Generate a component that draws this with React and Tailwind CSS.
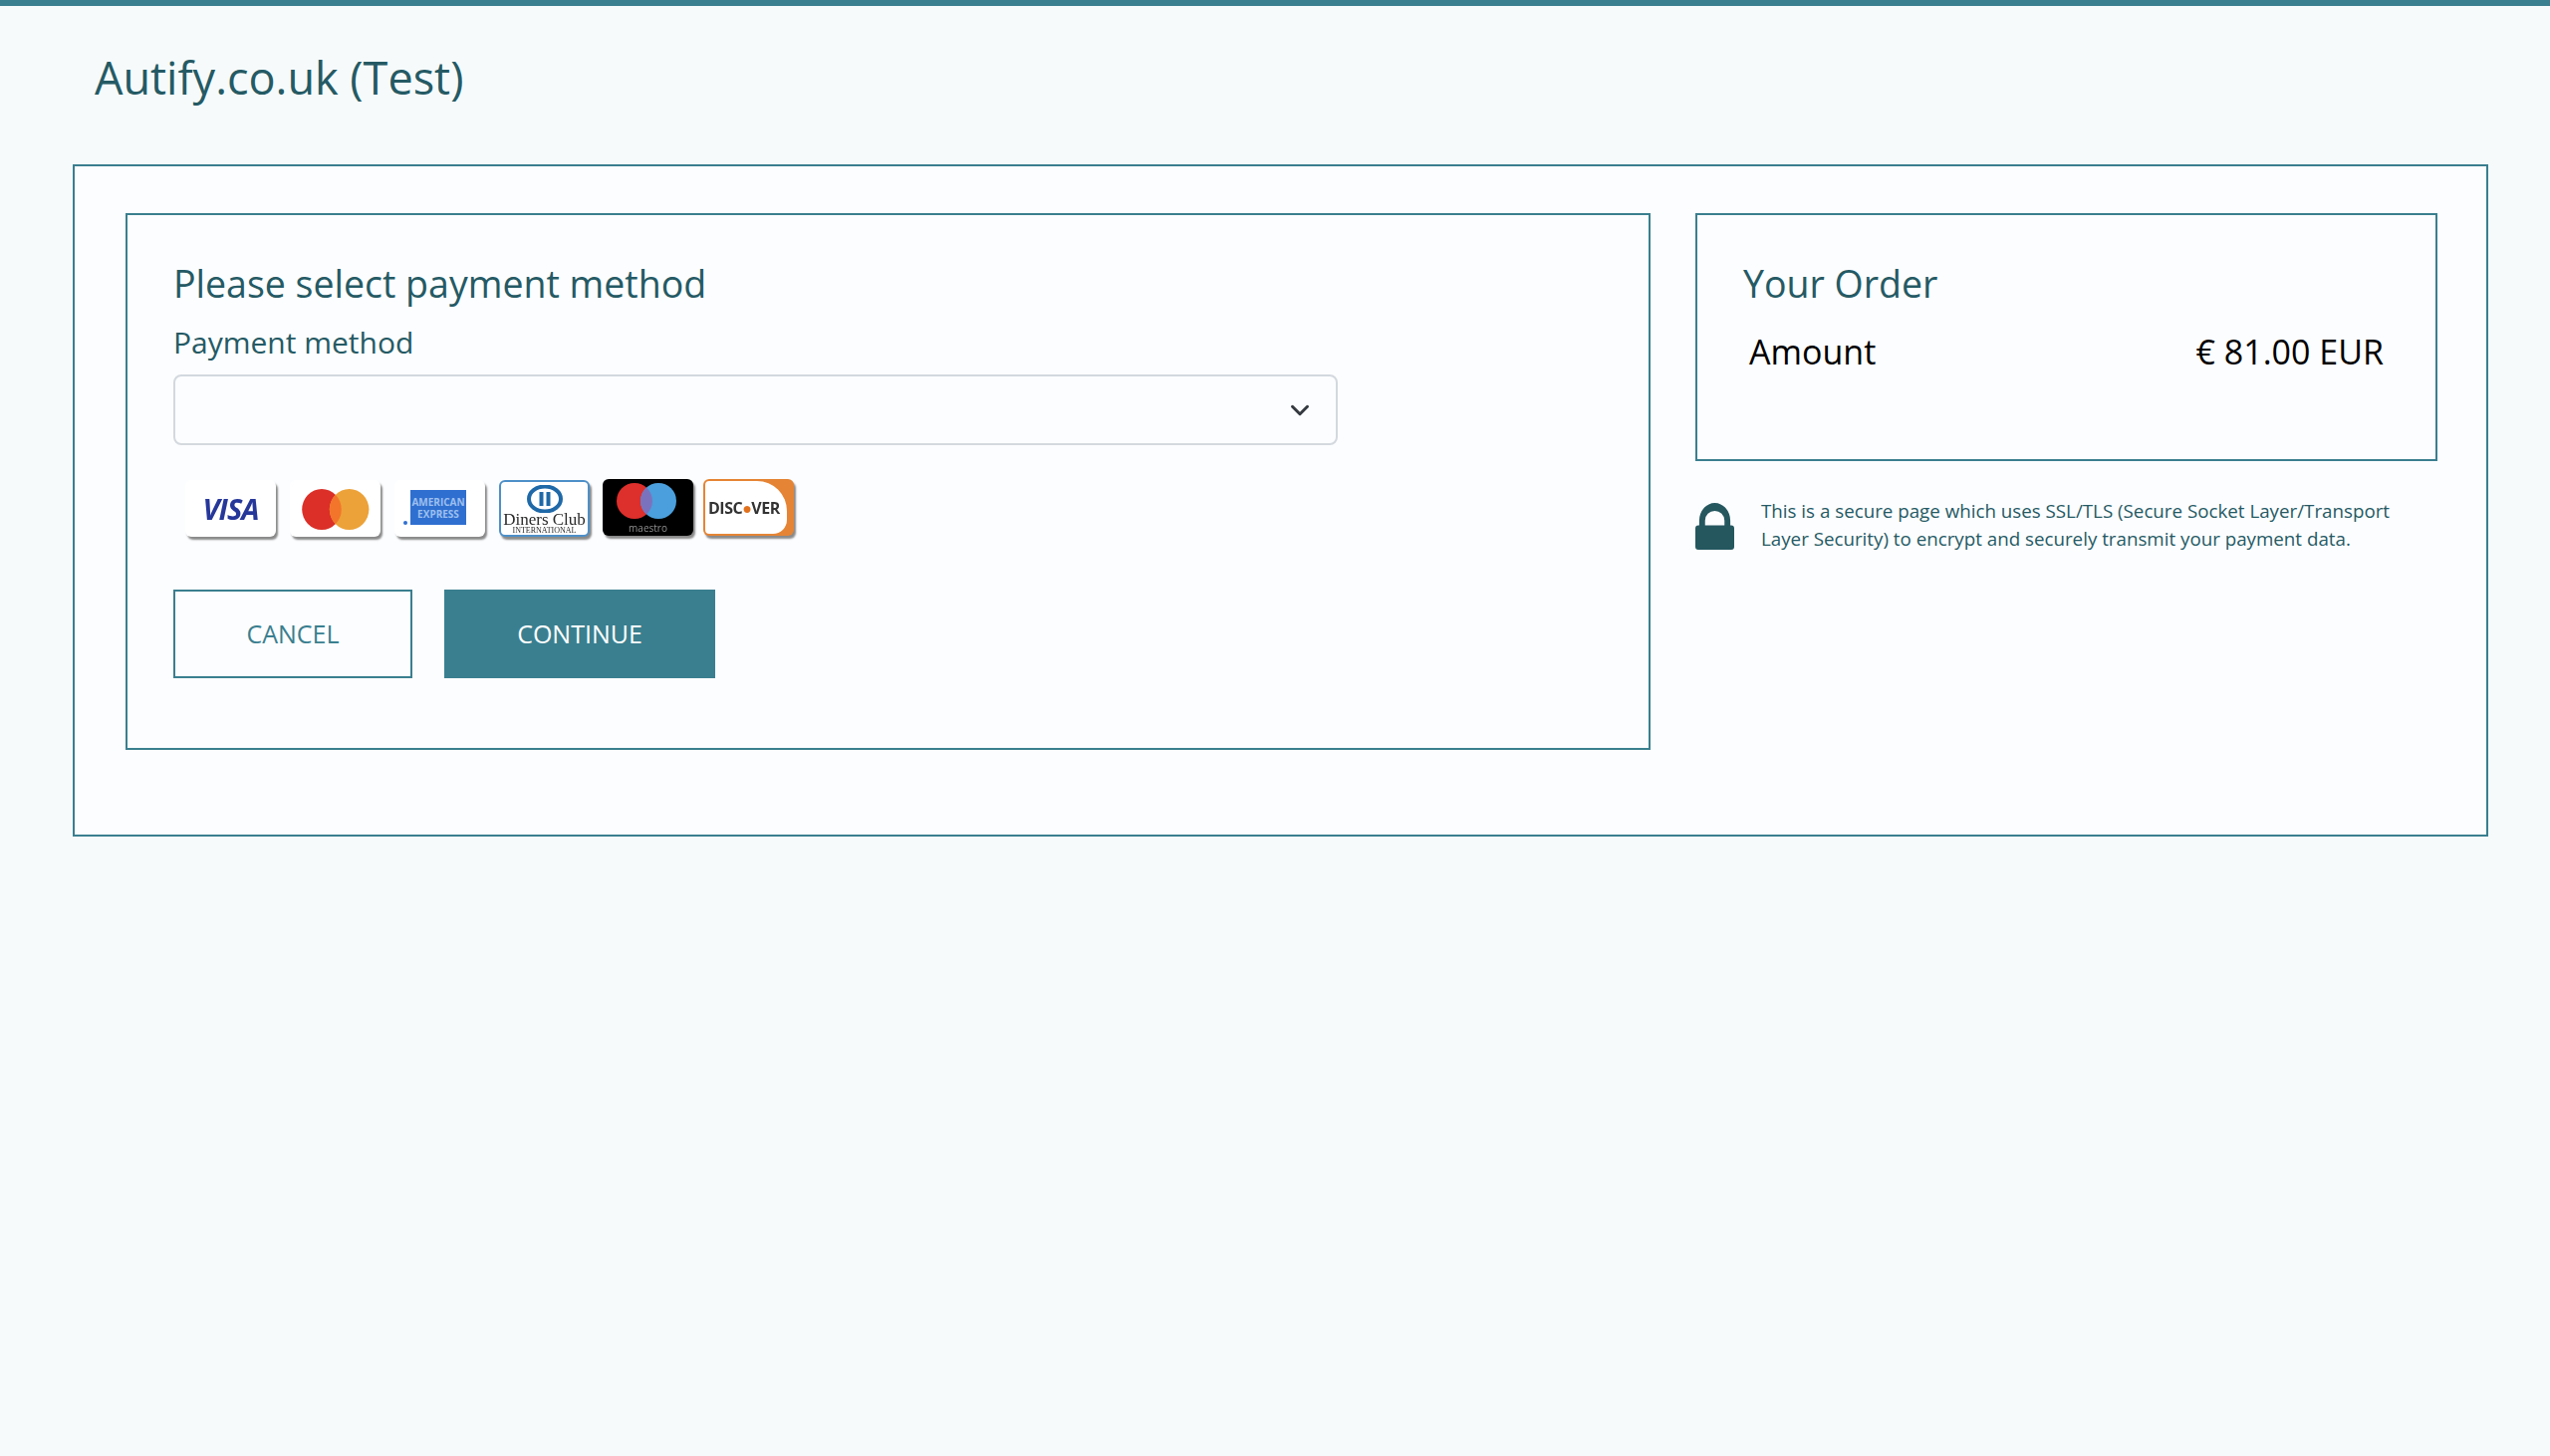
import React from 'react';
import { ChevronDown } from 'lucide-react';

function Card({ className = '', children }) {
  return (
    <div className={`w-[91px] h-[57px] rounded-[6px] overflow-hidden shrink-0 relative shadow-[2px_3px_2px_#8a8a8a] ${className}`}>
      {children}
    </div>
  );
}

export default function App() {
  return (
    <div className="min-h-[1462px] bg-[#f6fafb] font-['Open_Sans',sans-serif] text-[#255a64]">
      <div className="h-[6px] bg-[#3a7f8f]" />

      <h1 className="pl-[95px] pt-[39px] h-[159px] text-[45px] leading-[66px]">Autify.co.uk (Test)</h1>

      {/* Outer panel */}
      <div className="ml-[73px] mr-[62px] h-[675px] border-2 border-[#3a7f8f] bg-[#fcfdff] pl-[51px] pt-[47px] flex items-start">
        {/* Payment method */}
        <div className="w-[1531px] h-[539px] border-2 border-[#3a7f8f] pl-[46px] pt-[44px] shrink-0">
          <h2 className="text-[37.5px] leading-[50px]">Please select payment method</h2>
          <label className="block text-[30px] leading-[42px] mt-[13px]">Payment method</label>

          <div className="w-[1169px] h-[71px] mt-[11px] border-2 border-[#d3d9de] rounded-[8px] flex items-center justify-end pr-[21px]">
            <ChevronDown className="w-[30px] h-[30px] text-[#343a40]" strokeWidth={2.4} />
          </div>

          {/* Card logos */}
          <div className="flex items-start gap-[14px] ml-[12px] mt-[35px] h-[60px] blur-[0.5px]">
            <Card className="bg-white">
              <div className="h-full flex items-center justify-center text-[29px] font-bold italic text-[#26379a] tracking-[-1px]">VISA</div>
            </Card>
            <Card className="bg-white">
              <svg viewBox="0 0 91 57" className="w-full h-full">
                <ellipse cx="32" cy="29.5" rx="19.8" ry="20.5" fill="#db2f28" />
                <ellipse cx="59.6" cy="29.5" rx="19.8" ry="20.5" fill="#eca238" />
                <path d="M45.8 14.8a19.8 20.5 0 0 1 0 29.4a19.8 20.5 0 0 1 0-29.4z" fill="#f2752b" />
              </svg>
            </Card>
            <Card className="bg-white">
              <div className="absolute left-[16px] top-[10px] w-[56px] h-[35px] bg-[#2f6fd0] flex flex-col items-center justify-center text-[10px] leading-[12px] font-bold text-[#9dbfee]">
                <span>AMERICAN</span>
                <span>EXPRESS</span>
              </div>
              <div className="absolute left-[9px] top-[41px] w-[4px] h-[4px] rounded-full bg-[#2f6fd0]" />
            </Card>
            <Card className="bg-white border-2 border-[#4d90c8]">
              <div className="flex flex-col items-center pt-[3px] text-[#2a2a2a]">
                <svg viewBox="0 0 36 28" className="w-[36px] h-[28px] shrink-0">
                  <ellipse cx="18" cy="14" rx="16" ry="12.5" fill="none" stroke="#1f69a8" strokeWidth="4" />
                  <path d="M14.5 7v14M21.5 7v14" stroke="#1f69a8" strokeWidth="4" />
                </svg>
                <span className="font-['Liberation_Serif',serif] text-[17px] leading-[13px] whitespace-nowrap">Diners Club</span>
                <span className="font-['Liberation_Serif',serif] text-[8px] leading-[9px] whitespace-nowrap">INTERNATIONAL</span>
              </div>
            </Card>
            <Card className="bg-black -mt-px -ml-[1px]">
              <svg viewBox="0 0 91 57" className="absolute inset-0 w-full h-full">
                <ellipse cx="32" cy="22" rx="18" ry="18" fill="#dd2f2b" />
                <ellipse cx="56" cy="22" rx="18" ry="18" fill="#4a9fdc" />
                <path d="M44 8.6a18 18 0 0 1 0 26.8a18 18 0 0 1 0-26.8z" fill="#7b72bd" />
              </svg>
              <span className="absolute left-0 right-0 bottom-[2px] text-center text-[10px] leading-[12px] text-[#8f8f8f]">maestro</span>
            </Card>
            <Card className="bg-[#e58434] -mt-px -ml-[4px]">
              <div className="absolute left-[2px] top-[2px] bottom-[2px] right-[7px] bg-white rounded-l-[4px] rounded-tr-[30px] rounded-br-[14px] flex items-center pl-[3px]">
                <span className="text-[16px] font-bold text-[#333] tracking-[-0.5px] whitespace-nowrap">
                  DISC<span className="text-[#e2711d]">●</span>VER
                </span>
              </div>
            </Card>
          </div>

          <div className="flex gap-[32px] mt-[50px]">
            <button className="w-[240px] h-[89px] border-2 border-[#3a7f8f] text-[#3a7f8f] text-[25px]">CANCEL</button>
            <button className="w-[272px] h-[89px] bg-[#3a7f8f] text-white text-[25px]">CONTINUE</button>
          </div>
        </div>

        {/* Order summary */}
        <div className="w-[745px] ml-[45px] shrink-0">
          <div className="h-[249px] border-2 border-[#3a7f8f] pl-[46px] pr-[52px] pt-[44px]">
            <h2 className="text-[37.5px] leading-[50px]">Your Order</h2>
            <div className="flex justify-between pl-[6px] mt-[15px] text-[34px] leading-[56px] text-black">
              <span>Amount</span>
              <span>€ 81.00 EUR</span>
            </div>
          </div>
          <div className="flex mt-[36px]">
            <svg viewBox="0 0 40 48" className="w-[39px] h-[47px] mt-[6px] shrink-0" fill="#25575f">
              <path fillRule="evenodd" d="M4 26V18a16 18 0 0 1 32 0v8h-6v-8a10 10 0 0 0-20 0v8z" />
              <rect x="0" y="23" width="40" height="25" rx="3" />
            </svg>
            <p className="ml-[27px] text-[18.75px] leading-[28px]">
              This is a secure page which uses SSL/TLS (Secure Socket Layer/Transport<br />
              Layer Security) to encrypt and securely transmit your payment data.
            </p>
          </div>
        </div>
      </div>
    </div>
  );
}
